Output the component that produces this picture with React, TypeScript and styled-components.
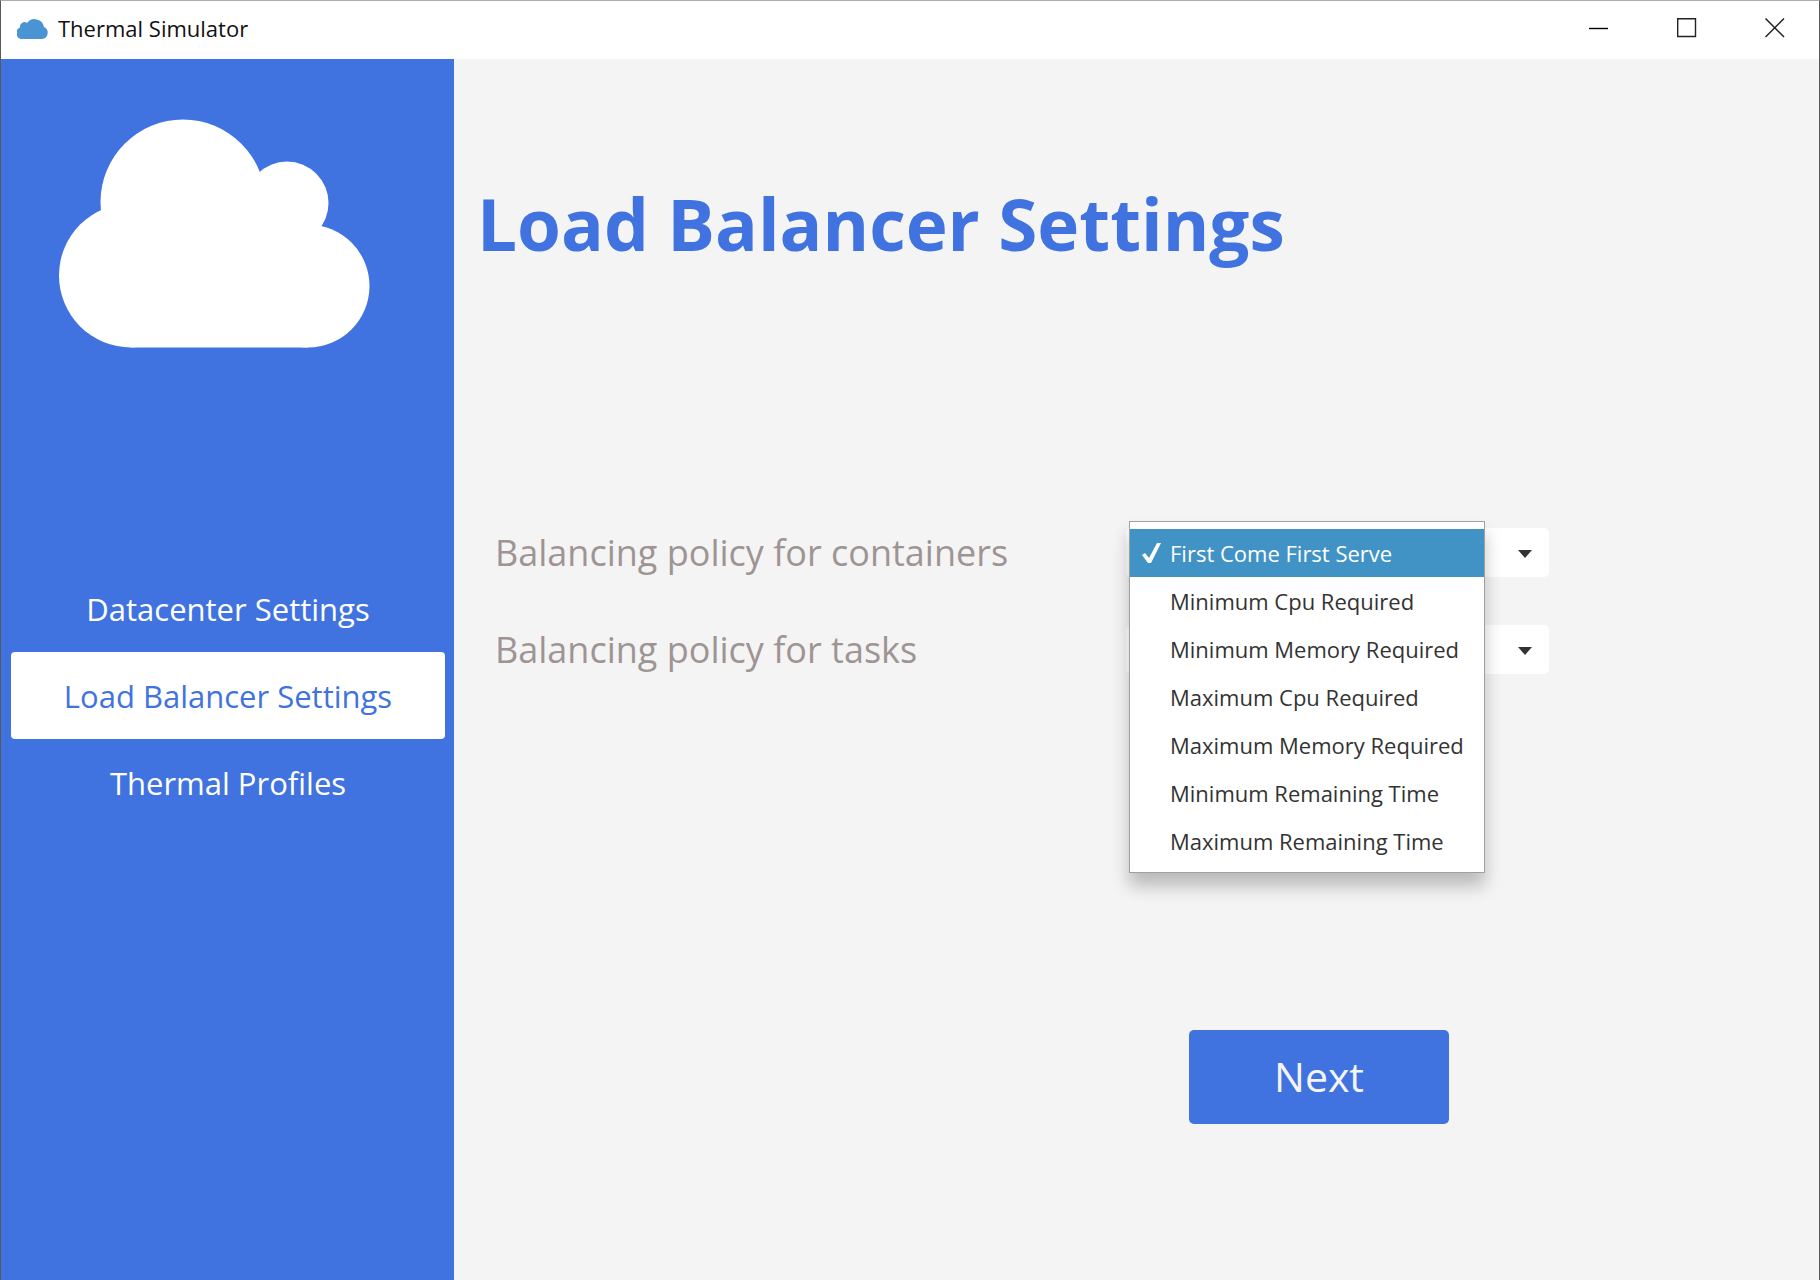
import { useState } from "react";
import styled, { createGlobalStyle } from "styled-components";

const blue = "#4073e0";

const GlobalStyle = createGlobalStyle`
  *, *::before, *::after { box-sizing: border-box; }
  body { margin: 0; background: #f4f4f4; }
  body, button, select { font-family: "Open Sans", "Noto Sans", sans-serif; }
`;

const Window = styled.div`
  display: flex;
  flex-direction: column;
  min-height: 100vh;
  border: 1px solid #58595c;
  border-top-color: #adadad;
  border-bottom: 0;
  background: #f4f4f4;
`;

const TitleBar = styled.header`
  display: flex;
  align-items: center;
  height: 58px;
  padding: 0 0 4px 16px;
  background: #fff;
`;

const AppTitle = styled.span`
  flex: 1;
  margin-left: 10px;
  font-size: 22px;
  line-height: 32px;
  color: #111;
`;

const WindowButton = styled.button`
  display: grid;
  place-items: center;
  width: 88px;
  height: 52px;
  padding: 0;
  border: 0;
  background: transparent;
`;

const Body = styled.div`
  display: flex;
  flex: 1;
`;

const Sidebar = styled.aside`
  flex: none;
  width: 453px;
  padding: 60px 9px 0 10px;
  background: ${blue};
`;

const Logo = styled.svg`
  display: block;
  margin-left: 48px;
`;

const Nav = styled.nav`
  display: flex;
  flex-direction: column;
  margin-top: 217px;
`;

const NavButton = styled.button<{ $active: boolean }>`
  height: 87px;
  padding: 0;
  border: 0;
  border-radius: 4px;
  font-size: 31px;
  background: ${(p) => (p.$active ? "#fff" : "transparent")};
  color: ${(p) => (p.$active ? blue : "#fff")};
`;

const Main = styled.main`
  flex: 1;
  padding: 115px 270px 0 23px;
`;

const Heading = styled.h1`
  margin: 0;
  font-size: 71px;
  line-height: 100px;
  font-weight: 700;
  color: ${blue};
  white-space: nowrap;
`;

const Form = styled.form`
  display: flex;
  flex-direction: column;
  gap: 48px;
  margin-top: 254px;
  padding-left: 18px;
`;

const Field = styled.div`
  display: flex;
  align-items: center;
  justify-content: space-between;
  height: 49px;
`;

const Label = styled.label`
  font-size: 36px;
  line-height: 48px;
  color: #9f9494;
`;

const Combo = styled.div`
  position: relative;
  display: flex;
  width: 423px;
  height: 49px;
`;

const Select = styled.select`
  width: 100%;
  padding: 0 80px 0 16px;
  border: 0;
  border-radius: 5px;
  appearance: none;
  background: #fff;
  font-size: 22px;
  color: #333;
`;

const Arrow = styled.svg`
  position: absolute;
  top: 22px;
  right: 16px;
  pointer-events: none;
`;

const Popup = styled.ul`
  position: absolute;
  z-index: 1;
  top: -7px;
  left: 3px;
  width: 356px;
  margin: 0;
  padding: 7px 0;
  border: 1px solid #a0a0a0;
  background: #fff;
  box-shadow: 0 13px 16px rgba(0, 0, 0, 0.24);
  list-style: none;
`;

const Option = styled.li<{ $selected: boolean }>`
  display: grid;
  grid-template-columns: 30px 1fr;
  align-items: center;
  height: 48px;
  padding-left: 10px;
  font-size: 22px;
  white-space: nowrap;
  background: ${(p) => (p.$selected ? "#4193c5" : "transparent")};
  color: ${(p) => (p.$selected ? "#fff" : "#333")};
`;

const OptionText = styled.span`
  grid-column: 2;
`;

const NextButton = styled.button`
  align-self: flex-end;
  width: 260px;
  height: 94px;
  margin: 308px 100px 0 0;
  padding: 0 0 2px;
  border: 0;
  border-radius: 5px;
  background: ${blue};
  color: #f4f4f4;
  font-size: 41px;
`;

const pages = ["Datacenter Settings", "Load Balancer Settings", "Thermal Profiles"];

const policies = [
  "First Come First Serve",
  "Minimum Cpu Required",
  "Minimum Memory Required",
  "Maximum Cpu Required",
  "Maximum Memory Required",
  "Minimum Remaining Time",
  "Maximum Remaining Time",
];

type PolicyFieldProps = { id: string; label: string; open?: boolean };

function PolicyField({ id, label, open = false }: PolicyFieldProps) {
  const [policy, setPolicy] = useState(policies[0]);
  return (
    <Field>
      <Label htmlFor={id}>{label}</Label>
      <Combo>
        <Select id={id} value={policy} onChange={(e) => setPolicy(e.target.value)}>
          {policies.map((p) => (
            <option key={p}>{p}</option>
          ))}
        </Select>
        <Arrow width="16" height="8" viewBox="0 0 16 8" aria-hidden="true">
          <path d="M1 0H15L8 8Z" fill="#333" />
        </Arrow>
        {open && (
          <Popup role="listbox" aria-label={label}>
            {policies.map((p) => (
              <Option key={p} role="option" aria-selected={p === policy} $selected={p === policy} onClick={() => setPolicy(p)}>
                {p === policy && (
                  <svg width="22" height="22" viewBox="0 0 22 22" aria-hidden="true">
                    <path d="M2 13L5 11L9 16L17 1L21 1L11 21H8Z" fill="#fff" />
                  </svg>
                )}
                <OptionText>{p}</OptionText>
              </Option>
            ))}
          </Popup>
        )}
      </Combo>
    </Field>
  );
}

export default function App() {
  const [page, setPage] = useState(pages[1]);
  return (
    <>
      <GlobalStyle />
      <Window>
        <TitleBar>
          <svg width="31" height="21" viewBox="0 0 31 21" aria-hidden="true">
            <path
              d="M6 21A6 6 0 0 1 3 9.500A4.500 4.500 0 0 1 10 5A9.500 9.500 0 0 1 27 9A6.300 6.300 0 0 1 25 21Z"
              fill="#4b94d3"
            />
          </svg>
          <AppTitle>Thermal Simulator</AppTitle>
          <WindowButton aria-label="Minimize">
            <svg width="20" height="20" viewBox="0 0 20 20">
              <path d="M0 10.500H19" stroke="#000" strokeWidth="1.400" />
            </svg>
          </WindowButton>
          <WindowButton aria-label="Maximize">
            <svg width="20" height="20" viewBox="0 0 20 20">
              <path d="M0.700 0.700H18.500V18.500H0.700Z" fill="none" stroke="#222" strokeWidth="1.400" />
            </svg>
          </WindowButton>
          <WindowButton aria-label="Close">
            <svg width="20" height="20" viewBox="0 0 20 20">
              <path d="M0.500 0.500L19 19M19 0.500L0.500 19" stroke="#222" strokeWidth="1.500" />
            </svg>
          </WindowButton>
        </TitleBar>
        <Body>
          <Sidebar>
            <Logo width="311" height="229" viewBox="59 119 311 229" fill="#fff" aria-hidden="true">
              <circle cx="183" cy="202" r="82.500" />
              <circle cx="287" cy="203" r="41.500" />
              <circle cx="131" cy="275.500" r="72" />
              <circle cx="308" cy="286" r="61.500" />
              <path d="M131 347.500H308V286L287 203L183 202L131 275Z" />
            </Logo>
            <Nav>
              {pages.map((p) => (
                <NavButton key={p} type="button" $active={p === page} onClick={() => setPage(p)}>
                  {p}
                </NavButton>
              ))}
            </Nav>
          </Sidebar>
          <Main>
            <Heading>{page}</Heading>
            <Form>
              <PolicyField id="containers" label="Balancing policy for containers" open />
              <PolicyField id="tasks" label="Balancing policy for tasks" />
              <NextButton type="button">Next</NextButton>
            </Form>
          </Main>
        </Body>
      </Window>
    </>
  );
}
